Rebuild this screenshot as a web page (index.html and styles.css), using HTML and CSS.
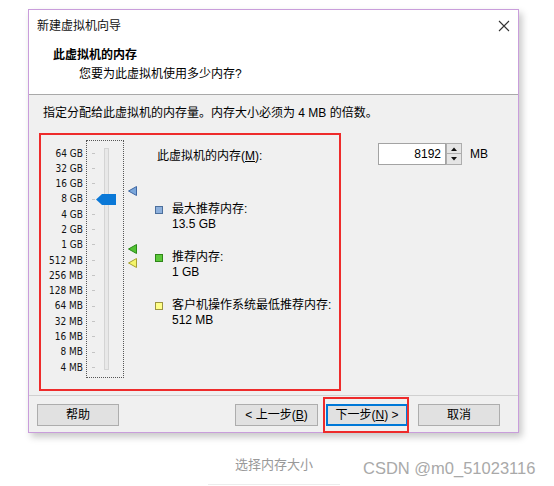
FILE: index.html
```html
<!DOCTYPE html>
<html lang="zh-CN">
<head>
<meta charset="utf-8">
<title>新建虚拟机向导</title>
<link rel="stylesheet" href="styles.css">
</head>
<body>
<div class="page">
  <div class="dialog">
    <div class="titlebar">
      <span class="title">新建虚拟机向导</span>
      <svg class="close" width="12" height="12" viewBox="0 0 12 12"><path d="M1 1 L11 11 M11 1 L1 11" stroke="#333" stroke-width="1.1" fill="none"/></svg>
    </div>
    <div class="header">
      <div class="h-title">此虚拟机的内存</div>
      <div class="h-sub">您要为此虚拟机使用多少内存?</div>
    </div>
    <div class="body">
      <p class="hint">指定分配给此虚拟机的内存量。内存大小必须为 4 MB 的倍数。</p>
      <div class="content">
        <div class="redbox">
          <div class="labels">
            <div class="lbl">64 GB</div><div class="lbl">32 GB</div><div class="lbl">16 GB</div><div class="lbl">8 GB</div><div class="lbl">4 GB</div><div class="lbl">2 GB</div><div class="lbl">1 GB</div><div class="lbl">512 MB</div><div class="lbl">256 MB</div><div class="lbl">128 MB</div><div class="lbl">64 MB</div><div class="lbl">32 MB</div><div class="lbl">16 MB</div><div class="lbl">8 MB</div><div class="lbl">4 MB</div>
          </div>
          <div class="slider">
            <div class="ticks">
              <i></i><i></i><i></i><i></i><i></i><i></i><i></i><i></i><i></i><i></i><i></i><i></i><i></i><i></i><i></i>
            </div>
            <div class="track"></div>
            <svg class="thumb" width="20" height="11" viewBox="0 0 20 11"><polygon points="0,5.5 6,0 20,0 20,11 6,11" fill="#0a78d7"/></svg>
          </div>
          <div class="markers">
            <svg class="mk mk-max" width="9" height="10" viewBox="0 0 9 10"><polygon points="0.5,5 8.5,0.5 8.5,9.5" fill="#7aa6da" stroke="#3f67a3" stroke-width="1"/></svg>
            <svg class="mk mk-rec" width="9" height="10" viewBox="0 0 9 10"><polygon points="0.5,5 8.5,0.5 8.5,9.5" fill="#52c233" stroke="#2a8a18" stroke-width="1"/></svg>
            <svg class="mk mk-min" width="9" height="10" viewBox="0 0 9 10"><polygon points="0.5,5 8.5,0.5 8.5,9.5" fill="#f4f46a" stroke="#a6a030" stroke-width="1"/></svg>
          </div>
          <div class="info">
            <div class="mem-label">此虚拟机的内存(<u>M</u>):</div>
            <div class="legend">
              <div class="item">
                <div class="item-title"><span class="sq sq-blue"></span>最大推荐内存:</div>
                <div class="item-val">13.5 GB</div>
              </div>
              <div class="item">
                <div class="item-title"><span class="sq sq-green"></span>推荐内存:</div>
                <div class="item-val">1 GB</div>
              </div>
              <div class="item">
                <div class="item-title"><span class="sq sq-yellow"></span>客户机操作系统最低推荐内存:</div>
                <div class="item-val">512 MB</div>
              </div>
            </div>
          </div>
        </div>
        <div class="spin">
          <div class="spin-input">8192</div>
          <div class="spin-btns">
            <div class="sb"><svg width="6" height="4" viewBox="0 0 6 4"><polygon points="0,4 3,0.5 6,4" fill="#111"/></svg></div>
            <div class="sb"><svg width="6" height="4" viewBox="0 0 6 4"><polygon points="0,0 6,0 3,3.5" fill="#111"/></svg></div>
          </div>
          <span class="unit">MB</span>
        </div>
      </div>
    </div>
    <div class="footer">
      <button class="btn btn-help">帮助</button>
      <div class="spacer"></div>
      <button class="btn btn-back">&lt; 上一步(<u>B</u>)</button>
      <div class="next-wrap">
        <button class="btn btn-next">下一步(<u>N</u>) &gt;</button>
        <div class="next-mark"></div>
      </div>
      <button class="btn btn-cancel">取消</button>
    </div>
  </div>
  <div class="caption-row">
    <div class="caption">选择内存大小</div>
    <div class="watermark">CSDN @m0_51023116</div>
  </div>
</div>
</body>
</html>
```
FILE: styles.css
```css
* { box-sizing: border-box; }
html, body { margin: 0; padding: 0; background: #ffffff; }
body {
  font-family: "Liberation Sans", "Noto Sans CJK SC", sans-serif;
  font-size: 12px;
  color: #000;
  width: 554px;
  height: 486px;
  overflow: hidden;
}
.page { padding-top: 9px; }

.dialog {
  margin-left: 28px;
  width: 491px;
  border: 1px solid #c99ddb;
  background: #ffffff;
  box-shadow: 3px 4px 7px rgba(0, 0, 0, 0.22);
  display: flex;
  flex-direction: column;
}

.titlebar {
  height: 28px;
  display: flex;
  align-items: center;
  justify-content: space-between;
  padding: 4px 8px 0 8px;
}
.title { font-size: 12px; line-height: 16px; color: #111; }
.close { display: block; }

.header {
  height: 57px;
  border-bottom: 1px solid #a9a9a9;
  padding: 9px 0 0 24px;
}
.h-title { font-weight: bold; line-height: 16px; font-size: 12px; }
.h-sub { margin-top: 3px; padding-left: 26px; line-height: 16px; }

.body {
  background: #f0f0f0;
  padding: 10px 0 4px 10px;
}
.hint { margin: 0 0 12px 4px; line-height: 16px; }

.content { display: flex; align-items: flex-start; }

.redbox {
  width: 302px;
  height: 258px;
  border: 2px solid #ee2b2b;
  display: flex;
  align-items: flex-start;
  padding-top: 5px;
}

.labels {
  width: 42px;
  padding-top: 5.5px;
  text-align: right;
  font-family: "DejaVu Sans Condensed", "DejaVu Sans", sans-serif;
  font-size: 10px;
  color: #111;
}
.lbl { height: 15.3px; line-height: 15.3px; }

.slider {
  position: relative;
  margin-left: 3px;
  width: 38px;
  height: 238px;
  border: 1px dotted #555;
}
.ticks {
  padding-top: 4.5px;
  padding-left: 5px;
}
.ticks i {
  display: flex;
  align-items: center;
  height: 15.3px;
}
.ticks i::before {
  content: "";
  display: block;
  width: 3px;
  height: 1px;
  background: #c4c4c4;
}
.track {
  position: absolute;
  left: 17px;
  top: 7px;
  width: 5px;
  height: 222px;
  background: #e8e8e8;
  border: 1px solid #d4d4d4;
}
.thumb {
  position: absolute;
  left: 9px;
  top: 53px;
  display: block;
}

.markers {
  position: relative;
  width: 9px;
  height: 238px;
  margin-left: 4px;
}
.mk { position: absolute; left: 0; display: block; }
.mk-max { top: 46px; }
.mk-rec { top: 104px; }
.mk-min { top: 118px; }

.info {
  margin-left: 18px;
  padding-top: 8px;
}
.mem-label { line-height: 16px; padding-left: 2px; }
.mem-label u, .btn u { text-decoration: underline; text-underline-offset: 1px; }
.legend {
  margin-top: 38px;
  display: flex;
  flex-direction: column;
  gap: 18px;
}
.item-title {
  display: flex;
  align-items: center;
  line-height: 15px;
}
.item-val { line-height: 15px; padding-left: 17px; }
.sq {
  display: block;
  width: 8px;
  height: 8px;
  margin-right: 9px;
  border: 1px solid #555;
}
.sq-blue { background: #8db0dc; border-color: #4c6f9c; }
.sq-green { background: #5cc83a; border-color: #2e8618; }
.sq-yellow { background: #ffff88; border-color: #9c9440; }

.spin {
  display: flex;
  align-items: center;
  margin-left: 37px;
  margin-top: 10px;
}
.spin-input {
  width: 68px;
  height: 22px;
  background: #fff;
  border: 1px solid #a3a3a3;
  text-align: right;
  padding-right: 4px;
  line-height: 20px;
}
.spin-btns {
  display: flex;
  flex-direction: column;
  width: 16px;
  height: 22px;
}
.sb {
  height: 11px;
  background: #e5e5e5;
  border: 1px solid #adadad;
  display: flex;
  align-items: center;
  justify-content: center;
}
.sb + .sb { border-top: none; }
.sb svg { display: block; }
.unit { margin-left: 8px; line-height: 16px; }

.footer {
  background: #f0f0f0;
  border-top: 1px solid #d0d0d0;
  padding: 8px 18px 6px 8px;
  display: flex;
  align-items: center;
}
.spacer { flex: 1; }
.btn {
  font-family: "Liberation Sans", "Noto Sans CJK SC", sans-serif;
  font-size: 12px;
  height: 22px;
  width: 82px;
  padding: 0;
  margin: 0;
  background: #e1e1e1;
  border: 1px solid #adadad;
  color: #000;
  line-height: 20px;
}
.btn-back { width: 83px; }
.next-wrap {
  position: relative;
  margin-left: 8px;
  margin-right: 10px;
  height: 22px;
}
.btn-next {
  border: 2px solid #0078d7;
  line-height: 18px;
}
.next-mark {
  position: absolute;
  left: -3px;
  right: -1px;
  top: -7px;
  bottom: -7px;
  border: 2px solid #ee2b2b;
}

.caption-row {
  display: flex;
  align-items: flex-start;
  margin-top: 18px;
}
.caption {
  margin-left: 208px;
  width: 132px;
  text-align: center;
  font-family: "Noto Sans CJK SC", sans-serif;
  font-size: 13px;
  line-height: 16px;
  color: #999;
  padding: 5px 0 12px;
  border-bottom: 1px solid #ececec;
}
.watermark {
  margin-left: 23px;
  margin-top: 8px;
  font-family: "Liberation Sans", sans-serif;
  font-size: 16.5px;
  line-height: 18px;
  color: #a9a9a9;
}
```
